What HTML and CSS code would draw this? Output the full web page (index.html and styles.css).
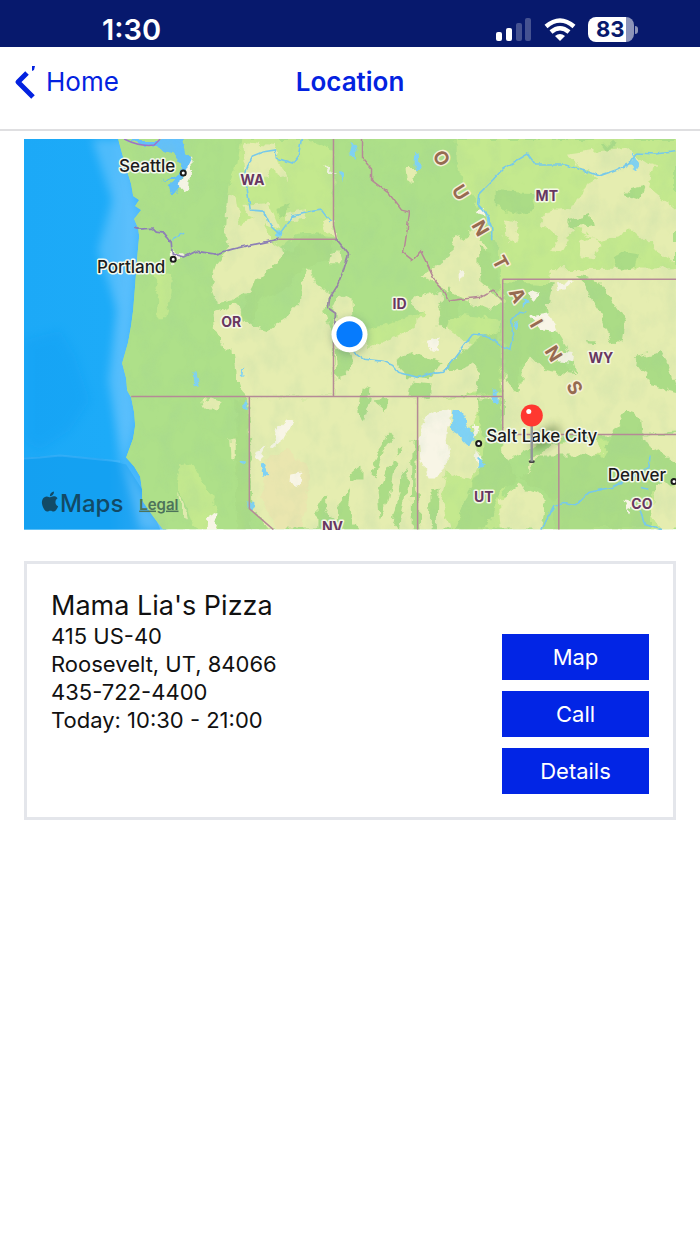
FILE: index.html
```
<!DOCTYPE html>
<html lang="en">
<head>
    <meta charset="utf-8">
    <meta name="viewport" content="width=device-width, initial-scale=1">
    <title>Location</title>
    <link rel="stylesheet" href="styles.css">
</head>
<body>
    <div class="statusbar">
        <span class="time">1:30</span>
        <div class="status-icons">
            <svg class="signal" width="36" height="24" viewBox="0 0 36 24" fill="#fff">
                <rect x="0" y="14" width="6" height="9" rx="2"/>
                <rect x="10" y="10" width="6" height="13" rx="2"/>
                <rect x="20" y="5" width="6" height="18" rx="2" opacity=".25"/>
                <rect x="29" y="0" width="6" height="23" rx="2" opacity=".25"/>
            </svg>
            <svg class="wifi" width="32" height="24" viewBox="0 0 32 24" fill="none" stroke="#fff" stroke-width="4.500">
                <path d="M2 8.500Q16 -3.500 30 8.500"/>
                <path d="M7 14Q16 6.500 25 14"/>
                <path d="M16 23L11 18Q16 14 21 18Z" fill="#fff" stroke="none"/>
            </svg>
            <div class="battery"><span>83</span></div>
        </div>
    </div>

    <header class="navbar">
        <a href="#" class="back">
            <svg width="22" height="36" viewBox="0 0 22 36" fill="none">
                <path d="M13 9L4 18L19 33" stroke="#0322e0" stroke-width="5" stroke-linejoin="round"/>
                <path d="M18 2h3l-1 4-2 1z" fill="#0322e0"/>
            </svg>
            Home
        </a>
        <h1>Location</h1>
    </header>

    <main>
        <svg class="map" viewBox="24 139 651 390" role="img" aria-label="Map">
            <defs>
                <linearGradient id="ocean" x1="0" x2="1" y1="0" y2="0">
                    <stop offset="0" stop-color="#1ca9f7"/>
                    <stop offset=".6" stop-color="#1dabf8"/>
                    <stop offset=".8" stop-color="#3fb4fb"/>
                    <stop offset="1" stop-color="#65c1ff"/>
                </linearGradient>
                <filter id="rough" x="0" y="0" width="100%" height="100%">
                    <feTurbulence type="fractalNoise" baseFrequency=".09" numOctaves="3" seed="4"/>
                    <feDisplacementMap in="SourceGraphic" scale="11" xChannelSelector="R" yChannelSelector="G"/>
                </filter>
                <filter id="line" filterUnits="userSpaceOnUse" x="24" y="139" width="651" height="390">
                    <feTurbulence type="fractalNoise" baseFrequency=".12" numOctaves="2" seed="9"/>
                    <feDisplacementMap in="SourceGraphic" scale="4" xChannelSelector="R" yChannelSelector="G"/>
                </filter>
                <filter id="relief" x="0" y="0" width="100%" height="100%">
                    <feTurbulence type="fractalNoise" baseFrequency=".05 .035" numOctaves="4" seed="7"/>
                    <feColorMatrix values="0 0 0 0 .3  0 0 0 0 .55  0 0 0 0 .35  0 0 0 1.600 -.68"/>
                </filter>
                <filter id="soft" x="-50%" y="-50%" width="200%" height="200%"><feGaussianBlur stdDeviation="5"/></filter>
                <clipPath id="land">
                    <path id="coast" d="M118 139L121 150L126 168L131 184L133 196L139 200L135 206L141 210L134 219L138 228L139 236L137 258L135 285L133 310L131 325L128 342L122 363L126 378L127 390L131 397L134 412L135 425L133 438L126 457L134 466L140 476L142 490L142 500L153 516L163 529H675V139Z"/>
                </clipPath>
            </defs>

            <!-- ocean -->
            <rect x="24" y="139" width="142" height="390" fill="url(#ocean)"/>
            <path d="M24 457L60 455L100 458L126 464L146 495L160 529H24Z" fill="#0b98ec" opacity=".5"/>
            <path d="M24 458L40 457L60 455L100 459L120 461" fill="none" stroke="#57bafa" stroke-width="2" opacity=".4"/>
            <path d="M92 139H125L139 220L130 340L135 420L126 460L145 500L165 529H140L122 460L108 380L117 310L98 250L112 200Z" fill="#8bd0ff" opacity=".45" filter="url(#soft)"/>
            <path d="M24 340L60 330L75 355L90 400L70 430L40 450L24 440Z" fill="#089df3" opacity=".35" filter="url(#soft)"/>

            <g clip-path="url(#land)">
                <rect x="24" y="139" width="651" height="390" fill="#aee089"/>
                <g filter="url(#rough)">
                    <rect x="24" y="139" width="651" height="390" fill="#aee089"/>
                    <!-- light green -->
                    <g fill="#c4e98e">
                        <path d="M240 139H305L333 150V220L330 236L300 232L270 255L246 250L228 220L226 192L236 165Z"/>
                        <path d="M456 139H675V300H500L498 250L490 235L475 200L462 185L456 160Z"/>
                        <path d="M156 273L174 275L172 295L166 317H158L160 300L154 285Z"/>
                        <path d="M180 465L192 463L205 485L215 505L216 529H195L183 500L176 482Z"/>
                        <path d="M335 345L370 330L430 310L500 320L502 396L340 390Z"/>
                        <path d="M417 396H502V529H417Z"/>
                        <path d="M560 440H675V529H575Z"/>
                    </g>
                    <!-- plains -->
                    <g fill="#e5edb0">
                        <path d="M226 192L236 195L240 224L262 214L270 240L285 250L288 265L270 275L260 285L250 290L232 300L218 303L211 285L216 262L228 248L224 225Z"/>
                        <path d="M242 205L268 203L278 227L250 216Z"/>
                        <path d="M243 142L272 145L287 180L270 170L262 184L245 175Z"/>
                        <path d="M284 213L305 209L302 219L285 221Z"/>
                        <path d="M323 222L334 220L336 238L325 230Z"/>
                        <path d="M325 254L338 250L341 264L328 264Z"/>
                        <path d="M307 266L314 282L327 293L322 310L332 335L334 396L248 398L239 388L233 350L218 343L215 312L235 304L245 322L268 330L285 318L300 303Z"/>
                        <path d="M340 294L351 300L352 320L369 347L395 337L420 320L430 300L440 305L450 330L470 345L480 360L482 392L430 398H334L333 310Z"/>
                        <path d="M249 398L335 396L417 398L420 529H270L251 508Z"/>
                        <path d="M417 398L500 396L496 410L480 405L470 430L480 460L470 480L445 470L440 500L450 529H417Z"/>
                        <path d="M420 275L450 255L456 235L465 240L473 225L487 250L485 285L500 300L490 310L458 297L445 290Z"/>
                        <path d="M404 168L415 168L412 183L405 180Z"/>
                        <path d="M410 300L430 290L442 296L450 320L425 315Z"/>
                        <path d="M565 155L600 150L625 148L640 160L655 165L650 190L675 210V240L645 242L632 230L600 240L575 228L560 240L540 222L550 210L572 208L580 190L598 180L582 170Z"/>
                        <path d="M558 236L568 240L560 253L552 250Z"/>
                        <path d="M505 220L514 222L516 240L508 243L504 235Z"/>
                        <path d="M580 240L592 236L601 245L594 258L579 256Z"/>
                        <path d="M645 235L675 232V262L655 250Z"/>
                        <path d="M550 269L680 268V430L650 434H560L502 460L504 404L508 390L520 388L525 360L540 355L560 368L575 372L565 345L550 320L545 300Z"/>
                        <path d="M502 375L508 378L522 405L530 430H504Z"/>
                        <path d="M498 500L516 485L535 493L545 500L540 529H500Z"/>
                        <path d="M530 460L550 445L590 435L600 450L580 470L545 480L525 474Z"/>
                        <path d="M630 435L680 434V462H640Z"/>
                        <path d="M655 485H680V529H660L650 515Z"/>
                        <path d="M202 401L210 397L222 402L216 408H204Z"/>
                        <path d="M230 437L240 435V455L231 457Z"/>
                        <path d="M178 493L185 510L187 518L180 515Z"/>
                    </g>
                    <!-- forests and hills -->
                    <g fill="#abdc86">
                        <path d="M335 347L346 346L350 362L345 376L337 378Z"/>
                        <path d="M360 386L370 388L368 405L363 422L358 410Z"/>
                        <path d="M372 400L388 398L385 412L376 405Z"/>
                        <path d="M378 450L388 432L391 436L382 455L376 478L372 475Z"/>
                        <path d="M349 474L362 462L362 480H352Z"/>
                        <path d="M378 488L392 458L396 462L388 500L380 518Z"/>
                        <path d="M401 475L408 465L404 500L398 529L392 520Z"/>
                        <path d="M339 503L350 490L347 510L358 529H340Z"/>
                        <path d="M318 500L328 496L324 512L335 520L330 529H318Z"/>
                        <path d="M412 440L418 436L416 480L420 529H411Z"/>
                        <path d="M431 490L437 488L436 529H430Z"/>
                        <path d="M395 450L403 446L400 452L396 454Z"/>
                        <path d="M394 360L410 352L440 362L430 378L405 376Z"/>
                        <path d="M410 382L430 384L428 396L408 396Z"/>
                        <path d="M447 360L460 355L475 340L500 330V390L475 396L480 370L470 365L450 372Z"/>
                        <path d="M476 398H500L502 450L518 480L500 490L485 529H455L468 490L480 470L482 440Z"/>
                        <path d="M503 281L550 283L545 310L548 340L572 375L545 370L530 355L518 368L520 390L504 382Z"/>
                        <path d="M576 275L598 280L625 320L622 340L612 345L598 310Z"/>
                        <path d="M540 455L600 455L625 410L640 415L642 440L680 465V480L650 490V529H550L556 500L520 478Z"/>
                        <path d="M633 358L660 352L668 365L678 392L650 385L643 370Z"/>
                        <path d="M585 340H596L594 344L586 343Z"/>
                        <path d="M478 245L490 255L500 290L480 283Z"/>
                        <path d="M435 320L450 285L460 305L445 330Z"/>
                        <path d="M494 190L530 192L535 208L515 214L494 205Z"/>
                        <path d="M566 220L590 215L592 224L570 230Z"/>
                        <path d="M645 185L640 200L625 195L630 188Z"/>
                        <path d="M612 258L624 250L638 252L635 266L615 272Z"/>
                        <path d="M300 240L320 234L333 245L330 262L300 268L285 290L262 300L250 325L240 310L255 280L280 260Z"/>
                        <path d="M235 398H248V470L252 529H236Z"/>
                        <path d="M600 144L616 143L606 152Z"/>
                        <path d="M276 210L290 205L280 218Z"/>
                    </g>
                    <!-- desert and salt flats -->
                    <path d="M262 460L290 450L310 470L300 529H275L262 500Z" fill="#efdfae" opacity=".5"/>
                    <g fill="#f8f5e6">
                        <path d="M287 418L293 420L283 438L270 448L276 430Z"/>
                        <path d="M256 450L266 446L258 462L254 460Z"/>
                        <path d="M290 474L302 472L299 484L289 481Z"/>
                        <path d="M423 420L438 411L450 408L446 440L448 458L438 478L428 478L420 460L418 438Z"/>
                        <path d="M207 520L220 512L214 529H206Z"/>
                        <path d="M185 161L191 158L192 175L188 183L190 192L183 194L178 188L184 178Z"/>
                        <path d="M172 251L184 256L174 264Z"/>
                        <path d="M322 166L331 170L336 172H325Z"/>
                        <path d="M424 343L440 338L438 352L430 349Z"/>
                        <path d="M474 211L482 210L484 218L476 217Z"/>
                        <path d="M555 282L570 281L565 287L557 289Z"/>
                        <path d="M530 315L548 312L556 330L540 328Z"/>
                        <path d="M560 350L572 352L570 362L558 360Z"/>
                        <path d="M472 425L478 430L474 440Z"/>
                        <path d="M474 448L482 458L478 468L473 457Z"/>
                        <path d="M528 291L540 294L533 304Z"/>
                        <path d="M622 500L634 502L628 512Z"/>
                        <path d="M458 268L464 272L458 282Z"/>
                    </g>
                    <!-- lakes -->
                    <g fill="#7fd2f5">
                        <path fill="#62c0fb" d="M130 139H182L186 152L190 160L184 172L181 185L175 192H168L174 180L163 181L176 175L180 165L172 155L155 148L140 146Z"/>
                        <path d="M452 408L460 410L468 425L476 438L468 446L458 436L450 425Z"/>
                        <path d="M190 375L195 372L200 384L195 385Z"/>
                        <path d="M258 464L263 463L267 475L260 474Z"/>
                        <path d="M246 501L252 500V509L246 508Z"/>
                        <path d="M484 213L490 218L490 228L486 224Z"/>
                        <path d="M624 168L632 154L638 170L632 166Z"/>
                        <path d="M414 151L419 152L420 168L414 168Z"/>
                        <path d="M349 143L357 146L353 158L349 152Z"/>
                        <path d="M339 170L342 172L341 182L338 177Z"/>
                        <path d="M276 228L281 232L280 240L276 236Z"/>
                        <path d="M522 297L527 304L522 310Z"/>
                        <path d="M513 320L518 318L516 330L512 326Z"/>
                        <path d="M493 390H498V402L493 400Z"/>
                        <path d="M240 373L245 368L244 376Z"/>
                        <path d="M244 402L248 400V410L244 408Z"/>
                        <path d="M478 458L485 463L480 469L477 465Z"/>
                        <path d="M240 460L245 461L243 466Z"/>
                    </g>
                </g>
                <rect x="24" y="139" width="651" height="390" filter="url(#relief)" opacity=".2"/>
            </g>

            <!-- rivers -->
            <g filter="url(#line)" fill="none" stroke="#77c9ea" stroke-width="1.600">
                <path d="M301 139L298 155L292 163L276 158L275 150L262 152L252 156L248 165L244 178L247 190L250 210L263 211L270 226L279 234L292 216L313 211L321 210L330 222"/>
                <path d="M353 351L364 359L383 361L392 365L398 372L417 377L432 373L443 372L453 359L462 347L472 334L485 335L500 345L510 349L512 340L511 320L518 312L526 313"/>
                <path d="M491 240V228L487 215L477 204L478 194L492 180L503 168L527 154L535 165L565 165L590 173L598 176L615 170L628 164L636 153L655 154L680 151"/>
                <path d="M541 529L553 505L563 502L575 504L588 492L610 487L628 478L648 468L649 455"/>
                <path d="M172 240L184 233M640 487L648 489M638 506L644 524L660 529"/>
            </g>

            <!-- state borders -->
            <g fill="none" stroke="#b58a96" stroke-width="1.500">
                <path d="M333 139V225L336 239H278M333 335V396M131 396H502M249 396V508L273 529M417 396V529M502 279H675M502 279V434H675M558 434V529"/>
                <path d="M361 139V157L371 169V180L388 193L401 210L409 212L405 240L403 253L412 260L420 251L426 263L434 280L441 288L448 301L460 299L480 297L492 290L502 300" filter="url(#line)"/>
                <path d="M134 227L140 229L152 228L156 232L164 233L171 242L172 254L184 257L196 251L215 254L232 249L245 246L260 243L278 239" stroke="#8d80b5" stroke-width="1.700" filter="url(#line)"/>
                <path d="M336 239L348 254L343 270L336 287L329 298L328 308L335 313L334 330" stroke="#9785a5" stroke-width="1.700" filter="url(#line)"/>
                <path d="M124 139Q140 147 154 145L160 139" stroke="#9d74c7"/>
            </g>

            <!-- map labels -->
            <g class="range-label">
                <text transform="translate(441 158) rotate(55)" dy="7">O</text>
                <text transform="translate(460 192) rotate(58)" dy="7">U</text>
                <text transform="translate(480 228) rotate(60)" dy="7">N</text>
                <text transform="translate(500 262) rotate(62)" dy="7">T</text>
                <text transform="translate(517 295) rotate(63)" dy="7">A</text>
                <text transform="translate(536 323) rotate(60)" dy="7">I</text>
                <text transform="translate(553 353) rotate(58)" dy="7">N</text>
                <text transform="translate(574 387) rotate(62)" dy="7">S</text>
            </g>
            <g class="state-label">
                <text x="252" y="185">WA</text>
                <text x="231" y="327">OR</text>
                <text x="399" y="309">ID</text>
                <text x="546" y="201">MT</text>
                <text x="600" y="363">WY</text>
                <text x="483" y="501">UT</text>
                <text x="641" y="508">CO</text>
                <text x="332" y="531">NV</text>
            </g>

            <!-- location pin -->
            <ellipse cx="545" cy="437" rx="17" ry="7" fill="#3c5a28" opacity=".5" filter="url(#soft)" transform="rotate(-35 545 437)"/>
            <g fill="#fff" stroke="#1c1c1c" stroke-width="2">
                <circle cx="183" cy="173" r="2.500"/>
                <circle cx="173" cy="259" r="2.500"/>
                <circle cx="478" cy="443" r="2.500"/>
                <circle cx="673" cy="481" r="2.500"/>
            </g>
            <g class="city-label">
                <text x="147" y="172">Seattle</text>
                <text x="131" y="273">Portland</text>
                <text x="541" y="442">Salt Lake City</text>
                <text x="636" y="480">Denver</text>
            </g>
            <ellipse cx="531" cy="461" rx="3" ry="1.500" fill="#444"/>
            <path d="M531 425V461" stroke="#929698" stroke-width="2.500"/>
            <circle cx="531" cy="415" r="11" fill="#ff3830"/>
            <circle cx="528" cy="411" r="2.500" fill="#fff"/>

            <!-- current position -->
            <circle cx="349" cy="336" r="18" fill="#466" opacity=".4" filter="url(#soft)"/>
            <circle cx="349" cy="334" r="18" fill="#fff"/>
            <circle cx="349" cy="334" r="13" fill="#067bfd"/>

            <g class="attribution">
                <path transform="translate(40 491) scale(.83)" d="M12.152 6.896c-.948 0-2.415-1.078-3.960-1.040-2.040.027-3.910 1.183-4.961 3.014-2.117 3.675-.546 9.103 1.519 12.090 1.013 1.454 2.208 3.090 3.792 3.039 1.520-.065 2.090-.987 3.935-.987 1.831 0 2.350.987 3.960.948 1.637-.026 2.676-1.480 3.676-2.948 1.156-1.688 1.636-3.325 1.662-3.415-.039-.013-3.182-1.221-3.220-4.857-.026-3.040 2.480-4.494 2.597-4.559-1.429-2.090-3.623-2.324-4.390-2.376-2-.156-3.675 1.090-4.610 1.090zM15.530 3.830c.843-1.012 1.400-2.427 1.245-3.830-1.207.052-2.662.805-3.532 1.818-.780.896-1.454 2.338-1.273 3.714 1.338.104 2.715-.688 3.559-1.701"/>
                <text class="brand" x="60" y="511">Maps</text>
                <a href="#"><text class="legal" x="139" y="509">Legal</text></a>
            </g>
        </svg>

        <section class="card">
            <address class="info">
                <h2>Mama Lia's Pizza</h2>
                <p>415 US-40</p>
                <p>Roosevelt, UT, 84066</p>
                <p>435-722-4400</p>
                <p>Today: 10:30 - 21:00</p>
            </address>
            <div class="actions">
                <button type="button">Map</button>
                <button type="button">Call</button>
                <button type="button">Details</button>
            </div>
        </section>
    </main>
</body>
</html>
```
FILE: styles.css
```
*{
    box-sizing:border-box;
}
body{
    margin:0;
    background:#fff;
    color:#111;
    font-family:Inter, "Liberation Sans", sans-serif;
}
h1, h2, p{
    margin:0;
}

/* status bar */
.statusbar{
    display:flex;
    justify-content:space-between;
    align-items:center;
    height:47px;
    padding:12px 66px 0 102px;
    background:#07196d;
    color:#fff;
}
.time{
    font-size:29px;
    font-weight:600;
    line-height:34px;
}
.status-icons{
    display:flex;
    align-items:center;
    gap:12px;
}
.battery{
    position:relative;
    width:46px;
    height:25px;
    border-radius:8px;
    background:linear-gradient(to right, #fff 38px, #8c94ba 38px);
    color:#07196d;
    font-size:22px;
    font-weight:700;
    line-height:25px;
    padding-left:8px;
}
.battery::after{
    content:"";
    position:absolute;
    right:-4px;
    top:9px;
    width:3px;
    height:8px;
    border-radius:0 3px 3px 0;
    background:#8c94ba;
}

/* navigation */
.navbar{
    display:grid;
    grid-template-columns:1fr auto 1fr;
    align-items:center;
    height:84px;
    padding:0 14px 12px;
    border-bottom:2px solid #dfdfe1;
    color:#0322e0;
}
.navbar h1{
    font-size:26px;
    font-weight:600;
    line-height:32px;
}
.back{
    display:flex;
    align-items:center;
    gap:10px;
    color:#0322e0;
    font-size:26px;
    line-height:32px;
    text-decoration:none;
}

/* map */
main{
    padding:8px 24px;
}
.map{
    display:block;
    width:100%;
    height:auto;
}
.map text{
    paint-order:stroke;
    stroke-linejoin:round;
}
.range-label{
    fill:#966b51;
    stroke:#f6f0d8;
    stroke-width:3px;
    font-size:19px;
    font-weight:700;
    text-anchor:middle;
}
.state-label{
    fill:#673761;
    stroke:#f4f8e4;
    stroke-width:3px;
    font-size:14px;
    font-weight:700;
    text-anchor:middle;
}
.city-label{
    fill:#1c1c1c;
    stroke:#f4f9ee;
    stroke-width:3px;
    font-size:17px;
    font-weight:500;
    text-anchor:middle;
}
.attribution{
    fill:#124a66;
}
.brand{
    font-size:24px;
    font-weight:500;
}
.legal{
    fill:#4d735a;
    font-size:15px;
    font-weight:600;
    text-decoration:underline;
}

/* store card */
.card{
    display:flex;
    justify-content:space-between;
    align-items:flex-end;
    margin-top:31px;
    padding:26px 24px 23px;
    border:3px solid #e4e6eb;
}
.info{
    align-self:flex-start;
    font-style:normal;
    font-size:22px;
    line-height:28px;
}
.info h2{
    font-size:27px;
    font-weight:400;
    line-height:32px;
}
.actions{
    display:flex;
    flex-direction:column;
    gap:11px;
    width:147px;
    padding-top:44px;
}
.actions button{
    height:46px;
    border:0;
    padding:0;
    background:#0225e5;
    color:#fff;
    font-family:inherit;
    font-size:22px;
}
```
